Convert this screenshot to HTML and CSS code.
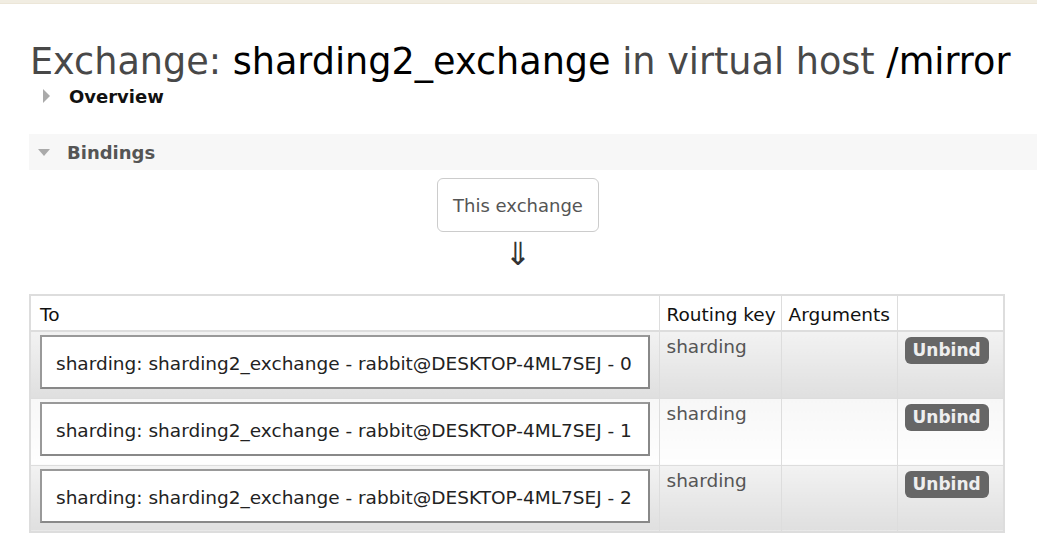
FILE: index.html
```html
<!DOCTYPE html>
<html>
<head>
<meta charset="utf-8">
<link rel="stylesheet" href="styles.css">
</head>
<body>
<div class="topbar"></div>
<main class="main">
  <h1 class="title">Exchange: <b>sharding2_exchange</b> in virtual host <b>/mirror</b></h1>
  <div class="section collapsed">
    <div class="section-head"><span class="tri-right"></span>Overview</div>
  </div>
  <div class="section open">
    <div class="section-head"><span class="tri-down"></span>Bindings</div>
    <div class="bindings">
      <div class="source-wrap">
        <div class="source">This exchange</div>
        <div class="arrow">&#8659;</div>
      </div>
      <table class="list">
        <colgroup>
          <col class="c-to"><col class="c-rk"><col class="c-args"><col class="c-act">
        </colgroup>
        <thead>
          <tr><th>To</th><th>Routing key</th><th>Arguments</th><th></th></tr>
        </thead>
        <tbody>
          <tr class="alt1">
            <td><div class="dest">sharding: sharding2_exchange - rabbit@DESKTOP-4ML7SEJ - 0</div></td>
            <td class="rk">sharding</td><td></td>
            <td class="act"><span class="btn">Unbind</span></td>
          </tr>
          <tr class="alt2">
            <td><div class="dest">sharding: sharding2_exchange - rabbit@DESKTOP-4ML7SEJ - 1</div></td>
            <td class="rk">sharding</td><td></td>
            <td class="act"><span class="btn">Unbind</span></td>
          </tr>
          <tr class="alt1">
            <td><div class="dest">sharding: sharding2_exchange - rabbit@DESKTOP-4ML7SEJ - 2</div></td>
            <td class="rk">sharding</td><td></td>
            <td class="act"><span class="btn">Unbind</span></td>
          </tr>
        </tbody>
      </table>
    </div>
  </div>
</main>
</body>
</html>
```
FILE: styles.css
```css
html, body { margin: 0; padding: 0; background: #fff; }
body { font-family: "DejaVu Sans", Verdana, sans-serif; color: #444; }
.topbar { height: 3px; background: #f1ede2; border-bottom: 1px solid #ece6d8; }
.main { padding: 0 0 0 29px; }
.title { margin: 0; padding: 37px 0 0 1px; font-size: 36.6px; font-weight: normal; color: #484848; line-height: 42px; white-space: nowrap; }
.title b { font-weight: normal; color: #000; }
.section-head { display: flex; align-items: center; font-weight: bold; font-size: 18px; height: 36px; padding-left: 10px; }
.collapsed .section-head { color: #111; height: 22px; margin-top: 2px; margin-bottom: 27px; }
.open .section-head { background: #f7f7f7; color: #555; }
.tri-right { width: 0; height: 0; border-top: 7px solid transparent; border-bottom: 7px solid transparent; border-left: 7px solid #aaa; margin: 0 19px 0 4px; }
.tri-down { width: 0; height: 0; border-left: 6px solid transparent; border-right: 6px solid transparent; border-top: 7px solid #aaa; margin: 0 17px 0 -1px; }
.bindings { padding-top: 8px; width: 974px; }
.source-wrap { display: flex; flex-direction: column; align-items: center; margin-left: 4px; }
.source { border: 1px solid #ccc; border-radius: 6px; padding: 0 15px; height: 52px; line-height: 54px; font-size: 18px; color: #555; }
.arrow { font-size: 32px; color: #333; height: 40px; line-height: 44px; margin-bottom: 22px; }
.list { border-collapse: collapse; table-layout: fixed; width: 974px; font-size: 18.5px; border: 2px solid #ddd; }
.c-to { width: 629px; }
.c-rk { width: 122px; }
.c-args { width: 116px; }
.c-act { width: 107px; }
.list th { text-align: left; font-weight: normal; color: #111; height: 36px; padding: 2px 6px 0 7px; border: 1px solid #ddd; border-bottom-width: 2px; box-sizing: border-box; white-space: nowrap; }
.list th:first-child { padding-left: 9px; }
.list td { border: 1px solid #ddd; vertical-align: top; height: 67px; padding: 0; box-sizing: border-box; }
.alt1 td { background: linear-gradient(#f2f2f2, #dfdfdf); }
.alt2 td { background: linear-gradient(#f7f7f7, #fefefe); }
.dest { margin: 3px 9px 0 9px; height: 54px; border: 2px solid #888; border-top-color: #999; border-left-color: #999; background: #fff; color: #222; display: flex; align-items: center; padding: 3px 0 0 14px; box-sizing: border-box; white-space: nowrap; }
.rk { padding: 4px 6px 0 7px !important; color: #555; }
.act { padding: 5px 0 0 7px !important; }
.btn { display: inline-block; background: #666; color: #eee; border-radius: 6px; font-weight: bold; font-size: 17px; padding: 0 8px; line-height: 27px; height: 27px; }
```
